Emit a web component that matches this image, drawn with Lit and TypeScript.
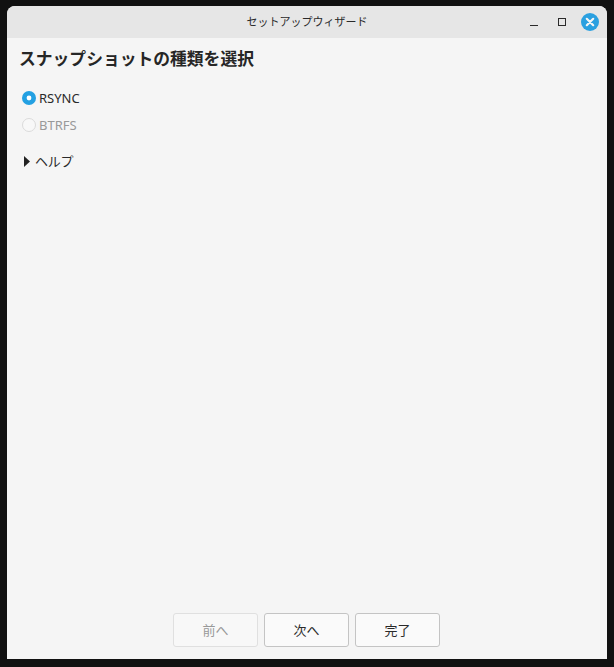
import { LitElement, html, css } from "lit";
import { customElement } from "lit/decorators.js";

@customElement("app-root")
export class AppRoot extends LitElement {
  static styles = css`
    :host {
      display: block;
      width: 614px;
      height: 667px;
      box-sizing: border-box;
      padding: 6px 7px 8px;
      background: #111111;
      overflow: hidden;
      font-family: "Noto Sans", "Noto Sans CJK JP", sans-serif;
      font-size: 13px;
      color: #2a2a2a;
    }
    .window {
      height: 100%;
      display: flex;
      flex-direction: column;
      background: #f5f5f5;
      border-radius: 8px 8px 0 0;
      overflow: hidden;
    }
    .titlebar {
      height: 32px;
      flex: none;
      background: #e6e6e6;
      display: grid;
      grid-template-columns: 1fr auto 1fr;
      align-items: center;
    }
    .title { font-size: 11px; color: #2a2a2a; line-height: 32px; }
    .controls {
      grid-column: 3;
      justify-self: end;
      display: flex;
      align-items: center;
      padding-right: 8px;
    }
    .ctl { display: block; flex: none; }
    .min { margin-right: 20px; margin-top: 2px; }
    .max { margin-right: 15px; }
    .content {
      flex: 1;
      display: flex;
      flex-direction: column;
      padding: 8px 15px 0 12px;
    }
    h1 {
      margin: 0;
      font-size: 16.8px;
      line-height: 26px;
      font-weight: 700;
      color: #262626;
    }
    .radios {
      display: flex;
      flex-direction: column;
      gap: 7px;
      margin: 16px 0 0 3px;
    }
    .radio {
      display: flex;
      align-items: center;
      gap: 3px;
      height: 20px;
    }
    .radio.off { color: #999999; }
    .dot { display: block; flex: none; }
    .help {
      display: flex;
      align-items: center;
      gap: 5px;
      margin: 15px 0 0 5px;
      height: 20px;
      letter-spacing: -0.3px;
    }
    .arrow { display: block; flex: none; margin-top: 2px; }
    .actions {
      flex: none;
      display: flex;
      justify-content: center;
      gap: 6px;
      padding: 0 1px 12px 0;
    }
    button {
      width: 85px;
      height: 34px;
      box-sizing: border-box;
      padding: 0 0 2px;
      background: #fafafa;
      border: 1px solid #c4c4c4;
      border-radius: 3px;
      font: inherit;
      color: #2a2a2a;
    }
    button[disabled] {
      color: #999999;
      border-color: #e0e0e0;
      background: #f8f8f8;
    }
  `;

  render() {
    return html`
      <div class="window">
        <div class="titlebar">
          <div></div>
          <div class="title">セットアップウィザード</div>
          <div class="controls">
            <svg class="ctl min" width="8" height="8" viewBox="0 0 8 8"><rect x="0" y="6" width="8" height="1" fill="#2a2a2a"/></svg>
            <svg class="ctl max" width="8" height="8" viewBox="0 0 8 8"><rect x="0.5" y="0.5" width="7" height="7" fill="none" stroke="#2a2a2a"/></svg>
            <svg class="ctl" width="18" height="18" viewBox="0 0 18 18">
              <circle cx="9" cy="9" r="9" fill="#2ba0e0"/>
              <path d="M5.8 5.8L12.2 12.2M12.2 5.8L5.8 12.2" stroke="#f5f5f5" stroke-width="2.2" stroke-linecap="round"/>
            </svg>
          </div>
        </div>
        <div class="content">
          <h1>スナップショットの種類を選択</h1>
          <div class="radios">
            <div class="radio">
              <svg class="dot" width="14" height="14" viewBox="0 0 14 14">
                <circle cx="7" cy="7" r="7" fill="#23a0e2"/>
                <circle cx="7" cy="7" r="2.4" fill="#ffffff"/>
              </svg>
              RSYNC
            </div>
            <div class="radio off">
              <svg class="dot" width="14" height="14" viewBox="0 0 14 14">
                <circle cx="7" cy="7" r="6.5" fill="#f8f8f8" stroke="#dadada"/>
              </svg>
              BTRFS
            </div>
          </div>
          <div class="help">
            <svg class="arrow" width="6" height="11" viewBox="0 0 6 11"><path d="M0 0L6 5.5L0 11Z" fill="#222222"/></svg>
            ヘルプ
          </div>
        </div>
        <div class="actions">
          <button disabled>前へ</button>
          <button>次へ</button>
          <button>完了</button>
        </div>
      </div>
    `;
  }
}
